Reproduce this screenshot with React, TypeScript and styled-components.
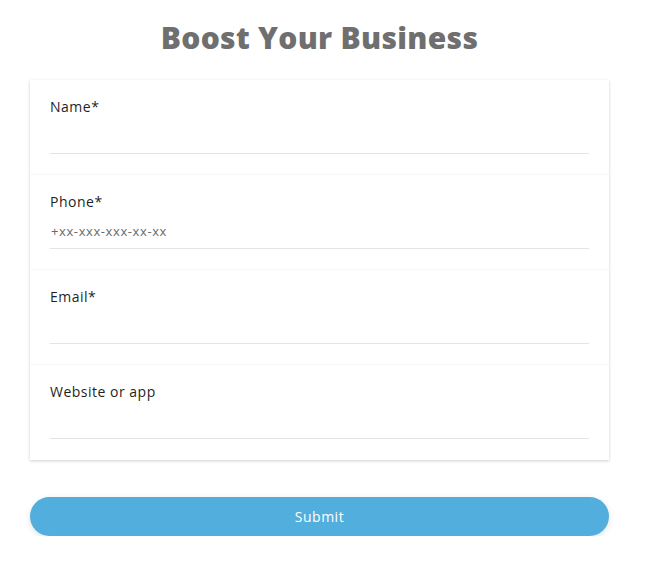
import React from 'react';
import styled, { createGlobalStyle } from 'styled-components';

const GlobalStyle = createGlobalStyle`
  body {
    margin: 0;
    background: #ffffff;
    font-family: 'Open Sans', 'Liberation Sans', sans-serif;
  }
`;

const Page = styled.div`
  width: 579px;
  padding: 18px 0 0 30px;
`;

const Title = styled.h1`
  margin: 0 0 22px;
  text-align: center;
  font-size: 30px;
  line-height: 40px;
  font-weight: 800;
  letter-spacing: 0.3px;
  color: #6f6f6f;
`;

const Fields = styled.div`
  display: flex;
  flex-direction: column;
`;

const Field = styled.div`
  background: #fff;
  padding: 16px 20px 21px;
  box-shadow: 0 1px 3px rgba(0, 0, 0, 0.2);
  display: flex;
  flex-direction: column;
`;

const Label = styled.label`
  font-size: 14px;
  line-height: 22px;
  letter-spacing: 0.5px;
  color: #1f1f1f;
`;

const Input = styled.input`
  height: 35px;
  border: 0;
  border-bottom: 1px solid #e4e4e4;
  padding: 0 1px;
  font-family: inherit;
  font-size: 13px;
  letter-spacing: 0.6px;
  color: #333;
  outline: none;
  background: transparent;

  &::placeholder {
    color: #6a6a6a;
  }
`;

const Submit = styled.button`
  margin-top: 37px;
  width: 100%;
  height: 39px;
  border: 0;
  border-radius: 20px;
  background: #52aedd;
  color: #fff;
  font-family: inherit;
  font-size: 14px;
  letter-spacing: 0.5px;
  box-shadow: 0 2px 6px rgba(0, 0, 0, 0.12);
  cursor: pointer;
`;

interface FieldRowProps {
  label: string;
  placeholder?: string;
}

function FieldRow({ label, placeholder }: FieldRowProps) {
  return (
    <Field>
      <Label>{label}</Label>
      <Input placeholder={placeholder} />
    </Field>
  );
}

export default function App() {
  return (
    <Page>
      <GlobalStyle />
      <Title>Boost Your Business</Title>
      <Fields>
        <FieldRow label="Name*" />
        <FieldRow label="Phone*" placeholder="+xx-xxx-xxx-xx-xx" />
        <FieldRow label="Email*" />
        <FieldRow label="Website or app" />
      </Fields>
      <Submit>Submit</Submit>
    </Page>
  );
}
